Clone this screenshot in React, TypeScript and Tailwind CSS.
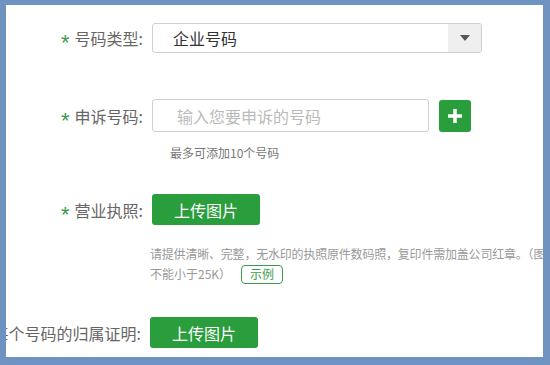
const FONT = { fontFamily: '"Noto Sans CJK SC", "Microsoft YaHei", sans-serif' };

function Label({ text, required = true, width = "w-[137px]" }: { text: string; required?: boolean; width?: string }) {
  return (
    <div className={`${width} flex shrink-0 items-center justify-end whitespace-nowrap text-[16px] text-[#666]`}>
      {required && (
        <span className="relative top-[5px] mr-[5px] font-['Liberation_Sans'] text-[22px] leading-none text-[#3a9b4a]">*</span>
      )}
      <span>{text}</span>
    </div>
  );
}

function UploadButton() {
  return (
    <button className="h-[31px] w-[108px] rounded-[3px] bg-[#2a9d3c] text-[16px] text-white">
      上传图片
    </button>
  );
}

export default function App() {
  return (
    <div style={FONT} className="h-[365px] w-[550px] bg-[#6f93c0] pb-[8px] pl-[6px] pr-[7px] pt-[5px]">
      <div className="h-full w-full overflow-hidden bg-white pt-[18px]">
        {/* 号码类型 */}
        <div className="flex items-center gap-[9px]">
          <Label text="号码类型:" />
          <div className="flex h-[30px] w-[330px] items-center overflow-hidden rounded-[3px] border border-[#cfcfcf]">
            <span className="flex-1 pl-[20px] text-[16px] text-[#333]">企业号码</span>
            <span className="flex h-full w-[33px] items-center justify-center bg-[#efefef]">
              <span className="h-0 w-0 border-x-[5px] border-t-[6px] border-x-transparent border-t-[#555]" />
            </span>
          </div>
        </div>

        {/* 申诉号码 */}
        <div className="mt-[46px] flex items-center gap-[9px]">
          <Label text="申诉号码:" />
          <div className="flex h-[33px] w-[277px] items-center rounded-[3px] border border-[#cfcfcf] pl-[24px] text-[16px] text-[#bbb]">
            输入您要申诉的号码
          </div>
          <button className="ml-[1px] flex h-[32px] w-[32px] items-center justify-center rounded-[3px] bg-[#2a9d3c]">
            <svg width="16" height="16" viewBox="0 0 16 16">
              <path d="M8 1v14M1 8h14" stroke="white" strokeWidth="3.5" />
            </svg>
          </button>
        </div>
        <div className="mt-[13px] pl-[164px] text-[12px] leading-[16px] text-[#777]">最多可添加10个号码</div>

        {/* 营业执照 */}
        <div className="mt-[33px] flex items-center gap-[9px]">
          <Label text="营业执照:" />
          <UploadButton />
        </div>
        <div className="mt-[19px] pl-[144px] text-[12px] leading-[20px] text-[#999]">
          <div className="whitespace-nowrap tracking-[-0.2px]">
            请提供清晰、完整，无水印的执照原件数码照，复印件需加盖公司红章。（图片大小不超过2M，
          </div>
          <div className="flex items-center">
            <span>不能小于25K）</span>
            <span className="ml-[10px] flex h-[19px] items-center rounded-[4px] border border-[#3a9b4a] px-[8px] text-[12px] leading-none text-[#3a9b4a]">
              示例
            </span>
          </div>
        </div>

        {/* 归属证明 */}
        <div className="mt-[33px] flex items-center gap-[9px]">
          <Label text="每个号码的归属证明:" required={false} width="w-[135px]" />
          <UploadButton />
        </div>
      </div>
    </div>
  );
}
